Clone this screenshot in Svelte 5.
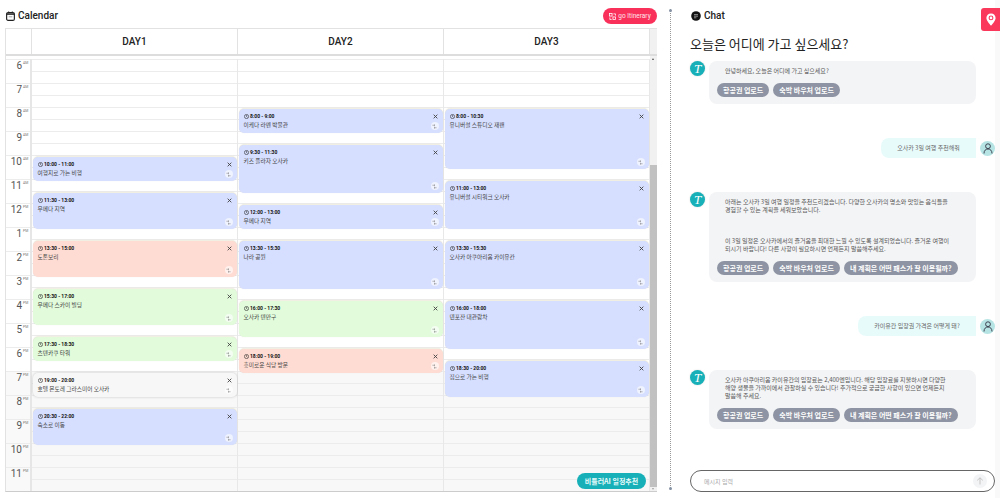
<script>
	const hours = [6, 7, 8, 9, 10, 11, 12, 1, 2, 3, 4, 5, 6, 7, 8, 9, 10, 11];
	const slots = Array.from({ length: 36 }, (_, i) => i);
	const HOUR = 24;

	function ev(start, end, label, title, kind = 'blue') {
		return { start, end, label, title, kind };
	}

	const days = [
		{
			name: 'DAY1',
			events: [
				ev(10, 11, '10:00 - 11:00', '여행지로 가는 비행'),
				ev(11.5, 13, '11:30 - 13:00', '우메다 지역'),
				ev(13.5, 15, '13:30 - 15:00', '도톤보리', 'red'),
				ev(15.5, 17, '15:30 - 17:00', '우메다 스카이 빌딩', 'green'),
				ev(17.5, 18.5, '17:30 - 18:30', '츠텐카쿠 타워', 'green'),
				ev(19, 20, '19:00 - 20:00', '호텔 몬토레 그라스미어 오사카', 'white'),
				ev(20.5, 22, '20:30 - 22:00', '숙소로 이동')
			]
		},
		{
			name: 'DAY2',
			events: [
				ev(8, 9, '8:00 - 9:00', '이케다 라멘 박물관'),
				ev(9.5, 11.5, '9:30 - 11:30', '키즈 플라자 오사카'),
				ev(12, 13, '12:00 - 13:00', '우메다 지역'),
				ev(13.5, 15.5, '13:30 - 15:30', '나라 공원'),
				ev(16, 17.5, '16:00 - 17:30', '오사카 텐만구', 'green'),
				ev(18, 19, '18:00 - 19:00', '흥미로운 식당 방문', 'red')
			]
		},
		{
			name: 'DAY3',
			events: [
				ev(8, 10.5, '8:00 - 10:30', '유니버설 스튜디오 재팬'),
				ev(11, 13, '11:00 - 13:00', '유니버설 시티워크 오사카'),
				ev(13.5, 15.5, '13:30 - 15:30', '오사카 아쿠아리움 카이유칸'),
				ev(16, 18, '16:00 - 18:00', '덴포잔 대관람차'),
				ev(18.5, 20, '18:30 - 20:00', '집으로 가는 비행')
			]
		}
	];

	const base = ['항공권 업로드', '숙박 바우처 업로드'];
	const full = [...base, '내 계획은 어떤 패스가 잘 이용될까?'];

	const messages = [
		{ from: 'bot', paras: ['안녕하세요, 오늘은 어디에 가고 싶으세요?'], chips: base },
		{ from: 'user', text: '오사카 3일 여행 추천해줘', width: 95 },
		{
			from: 'bot',
			paras: [
				'아래는 오사카 3일 여행 일정을 추천드리겠습니다. 다양한 오사카의 명소와 맛있는 음식들을 경험할 수 있는 계획을 세워보았습니다.',
				'이 3일 일정은 오사카에서의 즐거움을 최대한 느낄 수 있도록 설계되었습니다. 즐거운 여행이 되시기 바랍니다! 다른 사항이 필요하시면 언제든지 말씀해주세요.'
			],
			chips: full
		},
		{ from: 'user', text: '카이유칸 입장권 가격은 어떻게 돼?', width: 118 },
		{
			from: 'bot',
			paras: [
				'오사카 아쿠아리움 카이유칸의 입장료는 2,400엔입니다. 해당 입장료를 지불하시면 다양한 해양 생물을 가까이에서 관찰하실 수 있습니다! 추가적으로 궁금한 사항이 있으면 언제든지 말씀해 주세요.'
			],
			chips: full
		}
	];
</script>

<div class="page">
	<section class="calendar">
		<div class="panelHead">
			<h2>
				<svg width="9" height="10" viewBox="0 0 10 11">
					<rect x="0.7" y="1.7" width="8.6" height="8.6" rx="1.6" fill="#fff" stroke="#222" stroke-width="1.3" />
					<path d="M0.7 3.4h8.6" stroke="#222" stroke-width="1.6" />
					<path d="M3 0.4v2M7 0.4v2" stroke="#222" stroke-width="1" />
					<path d="M3 6.4h4" stroke="#999" stroke-width="1" />
				</svg>
				Calendar
			</h2>
			<button class="goBtn">
				<svg width="7" height="7" viewBox="0 0 8 8" fill="none" stroke="#fff" stroke-width="0.9">
					<rect x="0.5" y="0.5" width="3" height="3" />
					<rect x="4.5" y="4.5" width="3" height="3" />
					<path d="M5 1h2.5v2M1 5v2.5h2" />
				</svg>
				go Itinerary
			</button>
		</div>

		<div class="table">
			<div class="tableHead">
				<div class="corner"></div>
				{#each days as day}
					<div class="dayName">{day.name}</div>
				{/each}
				<div class="scrollHead"></div>
			</div>
			<div class="tableBody">
				<div class="scrollArea">
					<div class="gutter">
						{#each hours as h, i}
							<div class="hour" class:off={i >= 13}>
								<span class="num">{h}</span><span class="ampm">{i < 6 ? 'AM' : 'PM'}</span>
							</div>
						{/each}
					</div>
					{#each days as day}
						<div class="day">
							{#each slots as s}
								<div class="slot" class:off={s >= 26}></div>
							{/each}
							{#each day.events as e}
								<div
									class="event {e.kind}"
									style="top: {(e.start - 6) * HOUR + 2}px; height: {(e.end - e.start) * HOUR}px"
								>
									<div class="time">
										<svg width="5" height="5" viewBox="0 0 6 6" fill="none" stroke="#222" stroke-width="0.7">
											<circle cx="3" cy="3" r="2.5" />
											<path d="M3 1.4V3l1 .8" />
										</svg>
										{e.label}
									</div>
									<div class="title">{e.title}</div>
									<svg class="close" width="5" height="5" viewBox="0 0 6 6" stroke="#444" stroke-width="1.1">
										<path d="M0.8 0.8l4.4 4.4M5.2 0.8L0.8 5.2" />
									</svg>
									<span class="swap">
										<svg width="5" height="5" viewBox="0 0 6 6" fill="none" stroke="#777" stroke-width="0.6">
											<path d="M0.5 1.5h3M2.6 0.6l1 .9-1 .9M5.5 4.5h-3M3.4 3.6l-1 .9 1 .9" />
										</svg>
									</span>
								</div>
							{/each}
						</div>
					{/each}
				</div>
				<div class="scrollbar">
					<span class="arrowUp"></span>
					<div class="thumb"></div>
					<span class="arrowDown"></span>
				</div>
				<button class="aiBtn">비틀러AI 일정추천</button>
			</div>
		</div>
	</section>

	<div class="divider"></div>

	<section class="chat">
		<h2>
			<svg width="10" height="10" viewBox="0 0 10 10">
				<circle cx="5" cy="5" r="4.8" fill="#111" />
				<path d="M3 3.6h4M3 5.2h4M3 6.8h2.4" stroke="#aaa" stroke-width="0.8" />
			</svg>
			Chat
		</h2>
		<h1>오늘은 어디에 가고 싶으세요?</h1>
		<div class="messages">
			{#each messages as m}
				{#if m.from === 'bot'}
					<div class="botRow">
						<div class="botAvatar"><span>T</span></div>
						<div class="botBubble">
							{#each m.paras as p}
								<p>{p}</p>
							{/each}
							<div class="chips">
								{#each m.chips as c}
									<span class="chip">{c}</span>
								{/each}
							</div>
						</div>
					</div>
				{:else}
					<div class="userRow">
						<div class="userBubble" style="width: {m.width}px">{m.text}</div>
						<div class="userAvatar">
							<svg width="10" height="11" viewBox="0 0 10 11" fill="none" stroke="#334" stroke-width="0.9">
								<circle cx="5" cy="3.2" r="2.4" />
								<path d="M1 10.5C1 7.6 2.6 6 5 6s4 1.6 4 4.5" />
							</svg>
						</div>
					</div>
				{/if}
			{/each}
		</div>
		<div class="inputBox">
			<span class="placeholder">메시지 입력</span>
			<span class="send">
				<svg width="8" height="8" viewBox="0 0 8 8" fill="none" stroke="#bbb" stroke-width="0.8">
					<path d="M4 7.5V0.8M1.2 3.4L4 0.8l2.8 2.6" />
				</svg>
			</span>
		</div>
	</section>

	<div class="mapTab">
		<svg width="10" height="13" viewBox="0 0 10 13">
			<path d="M5 0.4C2.3 0.4 0.4 2.4 0.4 4.9 0.4 8 5 12.6 5 12.6S9.6 8 9.6 4.9C9.6 2.4 7.7 0.4 5 0.4z" fill="#fff" />
			<circle cx="5" cy="4.9" r="1.9" fill="none" stroke="#f9385c" stroke-width="1.1" />
		</svg>
	</div>
</div>

<style>
	:global(body) {
		background: #fff;
		overflow: hidden;
	}

	.page {
		position: relative;
		width: 1000px;
		height: 498px;
		display: flex;
		overflow: hidden;
		font-family: "Noto Sans CJK KR", Roboto, sans-serif;
		color: #222;
		background: linear-gradient(to right, #fff 995px, #f9f9f9 995px);
	}

	h1, h2, p {
		margin: 0;
		font-weight: 400;
	}

	h2 {
		display: flex;
		align-items: center;
		gap: 3px;
		font-family: Roboto, sans-serif;
		font-size: 10px;
		font-weight: 500;
		line-height: 12px;
	}

	/* left panel */
	.calendar {
		width: 652px;
		margin-left: 5px;
		flex-shrink: 0;
	}

	.panelHead {
		height: 28px;
		display: flex;
		align-items: flex-start;
		justify-content: space-between;
		padding-top: 8px;
		box-sizing: border-box;
	}

	.panelHead h2 {
		margin-top: 2px;
		margin-left: 1px;
	}

	.goBtn {
		width: 54px;
		height: 16px;
		border: none;
		border-radius: 8px;
		background: #f9305a;
		color: #ffe4ea;
		font-family: Roboto, sans-serif;
		font-size: 6.5px;
		display: flex;
		align-items: center;
		justify-content: center;
		gap: 2px;
		padding: 0;
	}

	.table {
		height: 464px;
		border: 1px solid #e2e2e2;
		border-bottom: 1px solid #ccc;
		border-right: none;
		box-sizing: border-box;
		display: flex;
		flex-direction: column;
	}

	.tableHead {
		height: 27px;
		flex-shrink: 0;
		display: grid;
		grid-template-columns: 26px repeat(3, 1fr) 7px;
		border-bottom: 2px solid #ddd;
		box-sizing: border-box;
	}

	.corner {
		border-right: 1px solid #e2e2e2;
	}

	.dayName {
		display: flex;
		align-items: center;
		justify-content: center;
		font-family: Roboto, sans-serif;
		font-size: 10px;
		font-weight: 500;
		color: #222;
		border-right: 1px solid #e2e2e2;
	}

	.scrollHead {
		background: #f1f1f1;
	}

	.tableBody {
		position: relative;
		flex: 1;
		display: flex;
		min-height: 0;
		overflow: hidden;
	}

	.scrollArea {
		flex: 1;
		display: grid;
		grid-template-columns: 26px repeat(3, 1fr);
		align-content: start;
		padding-top: 3px;
	}

	.gutter {
		border-right: 2px solid #e6e6e6;
		box-sizing: border-box;
	}

	.hour {
		height: 24px;
		box-sizing: border-box;
		border-top: 1px solid #ececec;
		display: flex;
		justify-content: flex-end;
		align-items: flex-start;
		color: #555;
	}

	.hour.off {
		background: #f9f9f9;
	}

	.num {
		font-family: Roboto, sans-serif;
		font-size: 10px;
		line-height: 11px;
	}

	.ampm {
		width: 7px;
		font-family: Roboto, sans-serif;
		font-size: 3.5px;
		line-height: 6px;
		margin-left: 1px;
		color: #777;
	}

	.day {
		position: relative;
		border-right: 1px solid #e8e8e8;
		box-sizing: border-box;
	}

	.slot {
		height: 12px;
		box-sizing: border-box;
		border-top: 1px solid #ececec;
	}

	.slot.off {
		background: #f8f8f8;
	}

	.event {
		position: absolute;
		left: 0.5px;
		right: 0.5px;
		border-radius: 5px;
		box-shadow: 0 -1px 1px rgba(200, 190, 140, 0.25), 0 0 1px rgba(0, 0, 0, 0.1);
	}

	.event.blue {
		background: #d6dfff;
	}

	.event.red {
		background: #ffdcd3;
	}

	.event.green {
		background: #e1fbdb;
	}

	.event.white {
		background: #f7f7f7;
		box-shadow: 0 0 3px rgba(0, 0, 0, 0.2);
	}

	.time {
		position: absolute;
		left: 5px;
		top: 4px;
		display: flex;
		align-items: center;
		gap: 1.5px;
		font-family: Roboto, sans-serif;
		font-size: 5px;
		font-weight: 700;
		line-height: 6px;
		color: #111;
	}

	.title {
		position: absolute;
		left: 5px;
		top: 12px;
		font-size: 5.7px;
		line-height: 8px;
		color: #444;
		white-space: nowrap;
	}

	.close {
		position: absolute;
		right: 5px;
		top: 5px;
	}

	.swap {
		position: absolute;
		right: 4px;
		bottom: 3px;
		width: 8px;
		height: 8px;
		border-radius: 50%;
		background: rgba(255, 255, 255, 0.6);
		display: flex;
		align-items: center;
		justify-content: center;
	}

	.scrollbar {
		width: 7px;
		flex-shrink: 0;
		background: #f1f1f1;
		display: flex;
		flex-direction: column;
		align-items: center;
		padding-top: 109px;
		position: relative;
		box-sizing: border-box;
	}

	.thumb {
		width: 100%;
		height: 322px;
		background: #c1c1c1;
	}

	.arrowUp, .arrowDown {
		position: absolute;
		left: 2px;
		width: 0;
		height: 0;
		border-left: 1.5px solid transparent;
		border-right: 1.5px solid transparent;
	}

	.arrowUp {
		top: 2px;
		border-bottom: 2px solid #505050;
	}

	.arrowDown {
		bottom: 1px;
		border-top: 2px solid #a0a0a0;
	}

	.aiBtn {
		position: absolute;
		left: 571px;
		bottom: 2px;
		width: 69px;
		height: 16px;
		border: none;
		border-radius: 8px;
		background: #17b0b8;
		color: #e8fbfb;
		font-family: "Noto Sans CJK KR", sans-serif;
		font-size: 7px;
		font-weight: 700;
		padding: 0;
	}

	/* divider */
	.divider {
		position: relative;
		width: 0;
		height: 481px;
		margin: 9px 0 0 13px;
		border-left: 1px dotted #999;
		flex-shrink: 0;
	}

	.divider::before, .divider::after {
		content: "";
		position: absolute;
		left: -2px;
		width: 3px;
		height: 3px;
		border-radius: 50%;
		background: #8592a3;
	}

	.divider::before {
		top: 0;
	}

	.divider::after {
		bottom: 0;
	}

	/* right panel */
	.chat {
		width: 305px;
		margin-left: 19px;
		flex-shrink: 0;
		display: flex;
		flex-direction: column;
		padding-top: 10px;
		box-sizing: border-box;
		height: 492px;
	}

	.chat h2 {
		margin-left: 1px;
	}

	.chat h1 {
		font-size: 13px;
		line-height: 20px;
		margin-top: 12px;
		color: #222;
	}

	.messages {
		flex: 1;
		display: flex;
		flex-direction: column;
		gap: 34px;
		margin-top: 7px;
	}

	.botRow {
		display: flex;
		gap: 4px;
		align-items: flex-start;
	}

	.botAvatar {
		width: 15px;
		height: 15px;
		border-radius: 50%;
		background: #17b0b8;
		display: flex;
		align-items: center;
		justify-content: center;
		flex-shrink: 0;
		box-shadow: 0 0 2px rgba(0, 0, 0, 0.15);
	}

	.botAvatar span {
		font-family: "Liberation Serif", serif;
		font-style: italic;
		font-size: 13px;
		line-height: 13px;
		color: #fff;
	}

	.botBubble {
		width: 267px;
		box-sizing: border-box;
		background: #f3f4f6;
		border-radius: 8px;
		padding: 6px 8px 7px;
	}

	.botBubble p {
		font-size: 6px;
		line-height: 8px;
		color: #555;
		padding: 0 18px 0 8px;
		word-break: keep-all;
	}

	.botBubble p + p {
		margin-top: 23px;
	}

	.chips {
		display: flex;
		gap: 4px;
		margin-top: 8px;
	}

	.chip {
		height: 14px;
		padding: 0 6px;
		border-radius: 7px;
		background: #8e94a3;
		color: #fff;
		font-size: 7px;
		font-weight: 700;
		line-height: 14px;
		white-space: nowrap;
	}

	.userRow {
		display: flex;
		justify-content: flex-end;
		align-items: flex-start;
		gap: 4px;
	}

	.userBubble {
		height: 20px;
		box-sizing: border-box;
		border-radius: 8px 0 0 8px;
		background: #e8fbfb;
		font-size: 6px;
		line-height: 20px;
		color: #666;
		text-align: center;
	}

	.userAvatar {
		width: 15px;
		height: 15px;
		margin-top: 3px;
		border-radius: 50%;
		background: #b6e4e4;
		display: flex;
		align-items: center;
		justify-content: center;
		overflow: hidden;
	}

	.inputBox {
		height: 22px;
		box-sizing: border-box;
		border: 1px solid #666;
		border-radius: 11px;
		display: flex;
		align-items: center;
		justify-content: space-between;
		padding: 0 7px 0 13px;
		flex-shrink: 0;
	}

	.placeholder {
		font-size: 6px;
		color: #aaa;
	}

	.send {
		width: 14px;
		height: 14px;
		border-radius: 50%;
		background: #f3f4f6;
		display: flex;
		align-items: center;
		justify-content: center;
	}

	.mapTab {
		position: absolute;
		right: 0;
		top: 8px;
		width: 19px;
		height: 23px;
		background: #f9385c;
		border-radius: 3px 0 0 3px;
		display: flex;
		align-items: center;
		justify-content: center;
	}
</style>
